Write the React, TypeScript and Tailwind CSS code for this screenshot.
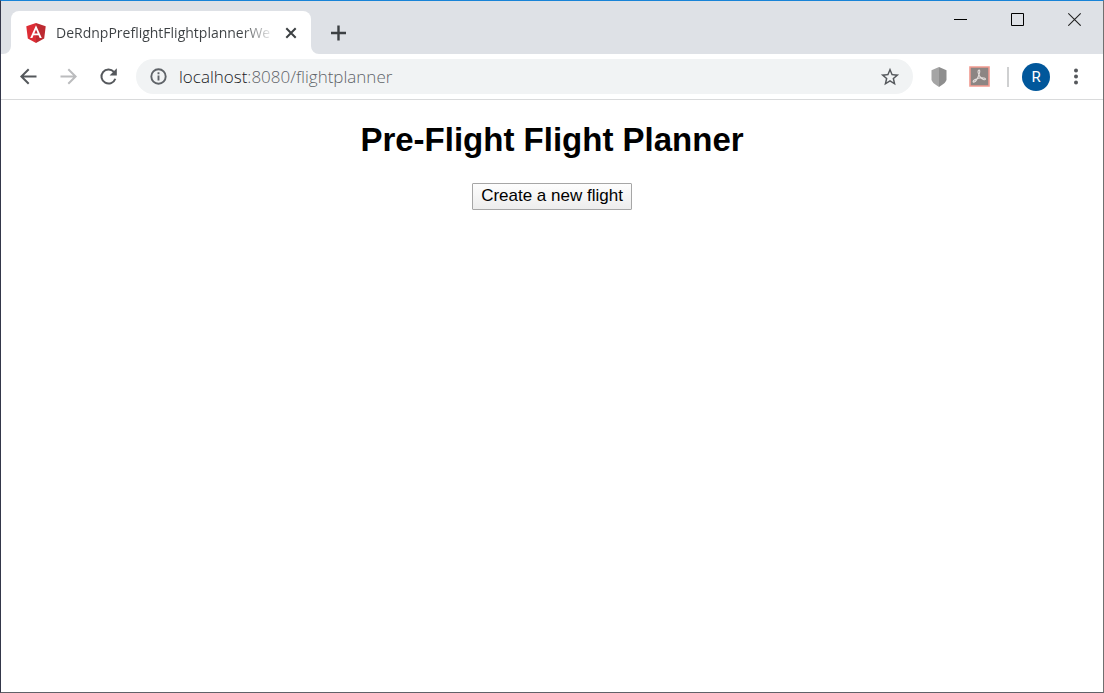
import React from "react";

function AngularIcon() {
  return (
    <svg className="h-5 w-5 shrink-0" viewBox="0 0 20 20" aria-hidden="true">
      <path d="M10 0 .3 3.3 1.8 15.6 10 20z" fill="#dd2c35" />
      <path d="M10 0l9.7 3.3L18.2 15.6 10 20z" fill="#bd2a31" />
      <path
        d="M10 2.2 4.2 15.1h2.2l1.1-2.9h5l1.2 2.9h2.1zm0 4.2 1.7 4.1H8.3z"
        fill="#fff"
        fillRule="evenodd"
      />
    </svg>
  );
}

function TabStrip() {
  return (
    <header className="flex h-[53px] items-end bg-[#dee1e6] pl-[2px]">
      <svg className="h-2 w-2 shrink-0" viewBox="0 0 8 8" aria-hidden="true">
        <path d="M8 0v8H0a8 8 0 0 0 8-8z" fill="#fff" />
      </svg>
      <div className="flex h-[43px] w-[300px] shrink-0 items-center rounded-t-lg bg-white pr-3 pl-[15px]">
        <AngularIcon />
        <span className="ml-[10px] w-[218px] overflow-hidden bg-gradient-to-r from-[#3c4043] from-85% to-transparent bg-clip-text font-['Open_Sans',sans-serif] text-[14px] leading-5 whitespace-nowrap text-transparent">
          DeRdnpPreflightFlightplannerWe
        </span>
        <button type="button" aria-label="Close tab" className="ml-[9px] flex h-4 w-4 shrink-0 items-center justify-center">
          <svg className="h-4 w-4" viewBox="0 0 16 16" aria-hidden="true">
            <path d="M3.3 3.3l9.4 9.4M12.7 3.3l-9.4 9.4" stroke="#3c4043" strokeWidth="2" />
          </svg>
        </button>
      </div>
      <svg className="h-2 w-2 shrink-0" viewBox="0 0 8 8" aria-hidden="true">
        <path d="M0 0v8h8a8 8 0 0 1-8-8z" fill="#fff" />
      </svg>
      <button type="button" aria-label="New tab" className="mb-[13px] ml-3 h-4 w-4">
        <svg className="h-4 w-4" viewBox="0 0 16 16" aria-hidden="true">
          <path d="M7.5 .5v15M0 8h15" stroke="#3c4043" strokeWidth="2.4" />
        </svg>
      </button>
      <div className="ml-auto flex gap-[43px] self-start pt-[11px] pr-[21px]">
        <button type="button" aria-label="Minimize">
          <svg className="h-[14px] w-[14px]" viewBox="0 0 14 14" aria-hidden="true">
            <path d="M0 7.5h13" stroke="#000" />
          </svg>
        </button>
        <button type="button" aria-label="Maximize">
          <svg className="h-[14px] w-[14px]" viewBox="0 0 14 14" aria-hidden="true">
            <path d="M.5 1.5h12v12H.5z" fill="none" stroke="#000" />
          </svg>
        </button>
        <button type="button" aria-label="Close">
          <svg className="h-[14px] w-[14px]" viewBox="0 0 14 14" aria-hidden="true">
            <path d="M.3 1.3l12.4 12.4M12.7 1.3L.3 13.7" stroke="#222" strokeWidth="1.1" />
          </svg>
        </button>
      </div>
    </header>
  );
}

function Toolbar() {
  return (
    <nav className="flex h-[46px] items-center border-b border-[#d9dadb] bg-white pr-[17px] pl-[17px]">
      <div className="flex shrink-0 items-center gap-5">
        <button type="button" aria-label="Back">
          <svg className="h-5 w-5" viewBox="0 0 20 20" fill="none" stroke="#55585c" strokeWidth="2" aria-hidden="true">
            <path d="M18.5 9.5H3.5M10.7 2.2 3.4 9.5l7.3 7.3" />
          </svg>
        </button>
        <button type="button" aria-label="Forward">
          <svg className="h-5 w-5" viewBox="0 0 20 20" fill="none" stroke="#bbbcbe" strokeWidth="2" aria-hidden="true">
            <path d="M2.5 9.5h15M10.3 2.2l7.3 7.3-7.3 7.3" />
          </svg>
        </button>
        <button type="button" aria-label="Reload">
          <svg className="h-5 w-5" viewBox="0 0 20 20" aria-hidden="true">
            <path d="M17.3 11.7A7.1 7.1 0 1 1 15.9 4.8" fill="none" stroke="#55585c" strokeWidth="2" />
            <path d="M18.8 1.3V8.5h-7.2z" fill="#55585c" />
          </svg>
        </button>
      </div>
      <div className="ml-[18px] flex h-[35px] min-w-0 flex-1 items-center rounded-full bg-[#f1f3f4] pr-3 pl-[13px]">
        <svg className="h-[18px] w-[18px] shrink-0" viewBox="0 0 18 18" aria-hidden="true">
          <circle cx="9.5" cy="8.5" r="7.2" fill="none" stroke="#5f6368" strokeWidth="1.9" />
          <path d="M9.5 7.5v5M9.5 4.3v2" stroke="#5f6368" strokeWidth="1.9" />
        </svg>
        <a
          href="#flightplanner"
          aria-label="Page address"
          className="ml-3 font-['Open_Sans',sans-serif] text-[17px] leading-6 font-[350] text-[#5f6368]"
        >
          <span className="text-[#202124]">localhost</span>:8080/flightplanner
        </a>
        <button type="button" aria-label="Bookmark this page" className="ml-auto shrink-0">
          <svg className="h-[22px] w-[22px]" viewBox="0 0 24 24" fill="#55585c" aria-hidden="true">
            <path d="M22 9.24l-7.19-.62L12 2 9.19 8.63 2 9.24l5.46 4.73L5.82 21 12 17.27 18.18 21l-1.63-7.03L22 9.24zM12 15.4l-3.76 2.27 1-4.28-3.32-2.88 4.38-.38L12 6.1l1.71 4.04 4.38.38-3.32 2.88 1 4.28L12 15.4z" />
          </svg>
        </button>
      </div>
      <div className="flex shrink-0 items-center">
        <button type="button" aria-label="Shield extension" className="ml-[18px]">
          <svg className="h-5 w-4" viewBox="0 0 16 20" aria-hidden="true">
            <path d="M8 0 .5 3.3v9.2Q.5 15.5 8 20z" fill="#a5a5a5" />
            <path d="M8 0l7.5 3.3v9.2q0 3-7.5 7.5z" fill="#8e8e8e" />
          </svg>
        </button>
        <button type="button" aria-label="PDF extension" className="ml-[22px]">
          <svg className="h-[21px] w-[21px]" viewBox="0 0 21 21" aria-hidden="true">
            <path d="M1 1h19v19H1z" fill="#8c8583" stroke="#f19a90" strokeWidth="1.6" />
            <path
              d="M9.3 4.5c1.4-1.2 2 .6.9 3.5-1.1 3.3-3.1 7.3-4.9 8-1.8.5-1.6-1.3.8-2.5 2.5-1.3 6.2-2 8.9-1.5 2.5.6 1.5 2.2-.6 1.5C11.9 12.7 9.5 9 9.1 6.5c-.1-1 0-1.6.2-2z"
              fill="none"
              stroke="#e4dedc"
              strokeWidth="1.1"
            />
          </svg>
        </button>
        <div className="ml-[17px] h-5 w-[2px] bg-[#cfd0d1]" />
        <button
          type="button"
          aria-label="Profile R"
          className="ml-[13px] flex h-7 w-7 items-center justify-center rounded-full bg-[#01579b] font-[Roboto,sans-serif] text-[15px] leading-5 text-white"
        >
          R
        </button>
        <button type="button" aria-label="Menu" className="ml-[16px]">
          <svg className="h-5 w-5" viewBox="0 0 20 20" fill="#55585c" aria-hidden="true">
            <circle cx="10" cy="3.5" r="2" />
            <circle cx="10" cy="9.5" r="2" />
            <circle cx="10" cy="15.5" r="2" />
          </svg>
        </button>
      </div>
    </nav>
  );
}

export default function App() {
  return (
    <div className="flex min-h-screen flex-col border border-t-[#1883d7] border-r-[#707070] border-b-[#606168] border-l-[#34374a] bg-white">
      <TabStrip />
      <Toolbar />
      <main className="flex flex-1 flex-col items-center pt-[21px] font-['Liberation_Sans',Arial,sans-serif] text-black">
        <h1 className="text-[33px] leading-[38px] font-bold">Pre-Flight Flight Planner</h1>
        <button
          type="button"
          className="mt-6 h-[27px] rounded-[1px] border border-[#a6a6a6] bg-gradient-to-b from-[#fdfdfd] to-[#ededed] px-2 pb-[2px] text-[17px] leading-[23px]"
        >
          Create a new flight
        </button>
      </main>
    </div>
  );
}
